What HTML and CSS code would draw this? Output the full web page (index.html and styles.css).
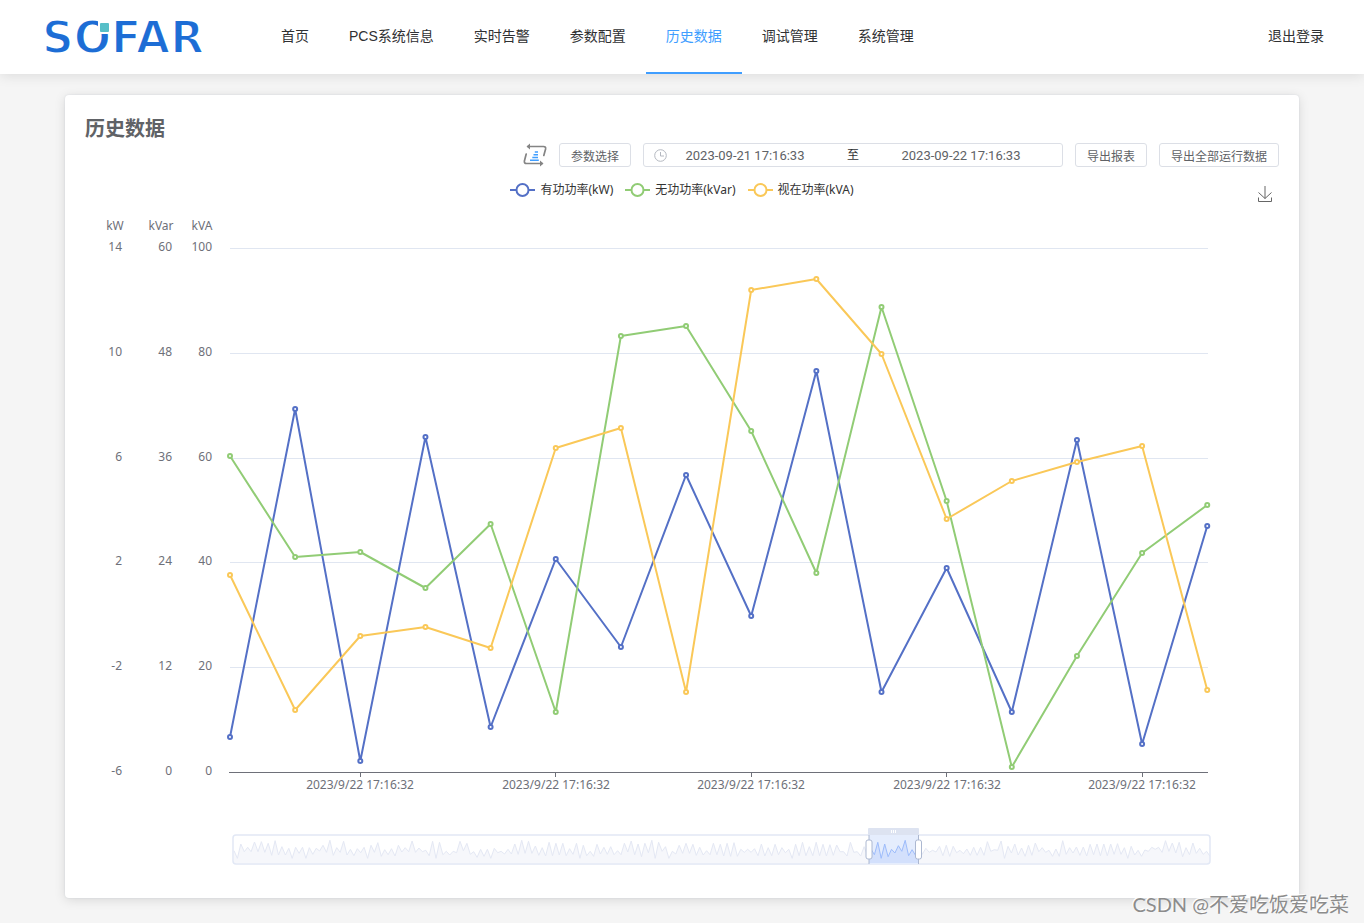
FILE: index.html
```html
<!DOCTYPE html>
<html lang="zh-CN">
<head>
<meta charset="utf-8">
<title>历史数据</title>
<link rel="stylesheet" href="styles.css">
</head>
<body>
<header class="topbar">
  <svg class="logo" width="170" height="40" viewBox="0 0 170 40" role="img" aria-label="SOFAR">
    <text class="logo-text" x="-3" y="35">SOFAR</text>
    <rect x="53" y="2" width="13" height="14" fill="#fff"/>
    <rect x="55" y="5" width="9" height="9" rx="1" fill="#57bfc8"/>
  </svg>
  <nav class="nav">
    <a href="#">首页</a>
    <a href="#">PCS系统信息</a>
    <a href="#">实时告警</a>
    <a href="#">参数配置</a>
    <a href="#" class="active">历史数据</a>
    <a href="#">调试管理</a>
    <a href="#">系统管理</a>
  </nav>
  <a href="#" class="logout">退出登录</a>
</header>

<main class="card">
  <h1 class="title">历史数据</h1>
  <div class="toolbar">
    <svg class="swap" width="24" height="24" viewBox="0 0 24 24" fill="none">
      <g stroke="#848484" stroke-width="1.700" stroke-linecap="round" stroke-linejoin="round">
        <path d="M5 3.500H20.500Q23 3.500 22.600 6L20.800 12.500"/>
        <path d="M19 20.500H3.500Q1 20.500 1.400 18L3.200 11"/>
      </g>
      <path d="M3.500 3.500L7 0.500V6.500ZM20.500 20.500L17 17.500V23.500Z" fill="#848484"/>
      <path d="M11.800 9H15M10.500 11.700H15M9.300 14.500H15M7 17.300H15.800" stroke="#409eff" stroke-width="1.500"/>
    </svg>
    <button type="button" class="btn">参数选择</button>
    <div class="range">
      <svg width="13" height="13" viewBox="0 0 13 13" fill="none" stroke="#b4b8c0">
        <circle cx="6.500" cy="6.500" r="5.800"/>
        <path d="M6.500 3V7H10"/>
      </svg>
      <input type="text" value="2023-09-21 17:16:33" aria-label="开始时间">
      <span>至</span>
      <input type="text" value="2023-09-22 17:16:33" aria-label="结束时间">
    </div>
    <button type="button" class="btn">导出报表</button>
    <button type="button" class="btn">导出全部运行数据</button>
  </div>

  <div class="chart-head">
    <ul class="legend">
      <li class="kw"><svg width="25" height="14"><path d="M0 7H25"/><circle cx="12.500" cy="7" r="6"/></svg>有功功率(kW)</li>
      <li class="kvar"><svg width="25" height="14"><path d="M0 7H25"/><circle cx="12.500" cy="7" r="6"/></svg>无功功率(kVar)</li>
      <li class="kva"><svg width="25" height="14"><path d="M0 7H25"/><circle cx="12.500" cy="7" r="6"/></svg>视在功率(kVA)</li>
    </ul>
    <button type="button" class="download" aria-label="下载">
      <svg width="16" height="17" viewBox="0 0 16 17" fill="none" stroke="#666">
        <path d="M1.500 11.500V15.500H14.500V11.500M8 0V12.500M1.500 6.500L8 12.500L14.500 6.500"/>
      </svg>
    </button>
  </div>

  <svg class="chart" viewBox="85 210 1194 668">
    <g class="grid">
      <path d="M230 248.500H1208M230 353.500H1208M230 458.500H1208M230 562.500H1208M230 667.500H1208"/>
    </g>
    <path class="axis" d="M229 772.500H1208M360.500 773V777M555.500 773V777M751.500 773V777M946.500 773V777M1142.500 773V777"/>
    <g id="labels"></g>
    <g id="series"></g>
    <g id="zoom">
      <path id="shade" class="shade"/>
      <path id="wave" class="wave"/>
      <rect class="zoom-box" x="233" y="835" width="977" height="29" rx="3"/>
      <rect class="zoom-sel" x="869" y="835" width="50" height="29"/>
      <clipPath id="sel"><rect x="869" y="835" width="50" height="29"/></clipPath>
      <g clip-path="url(#sel)">
        <path id="shade-sel" class="shade-sel"/>
        <path id="wave-sel" class="wave-sel"/>
      </g>
      <rect class="zoom-tab" x="868" y="828" width="51" height="7" rx="1"/>
      <path d="M891.500 830V833M893.500 830V833M895.500 830V833" stroke="#fff"/>
      <path class="handle" d="M869 835V864M918.500 835V864"/>
      <rect class="handle" x="866" y="840" width="6" height="19" rx="2"/>
      <rect class="handle" x="915.500" y="840" width="6" height="19" rx="2"/>
    </g>
  </svg>
</main>
<div class="watermark">CSDN @不爱吃饭爱吃菜</div>
<script src="chart.js"></script>
</body>
</html>
```
FILE: styles.css
```css
* { box-sizing: border-box; }
body {
  margin: 0;
  background: #f5f5f5;
  color: #303133;
  font: 14px "Liberation Sans", "Noto Sans CJK SC", sans-serif;
}
a { color: inherit; text-decoration: none; }
button, input { font: inherit; color: inherit; }

.topbar {
  display: flex;
  align-items: flex-start;
  padding: 0 40px 0 45px;
  background: #fff;
  box-shadow: 0 2px 12px rgba(0, 0, 0, 0.1);
}
.logo { margin: 18px 46px 0 0; flex: none; overflow: visible; }
.logo-text {
  font: bold 44px "DejaVu Sans", sans-serif;
  fill: #1d6dd5;
  stroke: #fff;
  stroke-width: 2px;
}
.nav { display: flex; flex: 1; }
.nav a {
  padding: 0 20px;
  line-height: 72px;
  border-bottom: 2px solid transparent;
  white-space: nowrap;
}
.nav .active { color: #409eff; border-color: #409eff; }
.logout { line-height: 72px; white-space: nowrap; }

.card {
  margin: 21px 65px 25px;
  padding: 20px;
  background: #fff;
  border-radius: 4px;
  box-shadow: 0 2px 12px rgba(0, 0, 0, 0.12), 0 0 2px #dcdfe6;
}
.title { margin: 0; font-size: 20px; line-height: 28px; color: #606266; }

.toolbar { display: flex; justify-content: flex-end; gap: 12px; height: 24px; }
.btn {
  padding: 0 11px;
  border: 1px solid #dcdfe6;
  border-radius: 3px;
  background: #fff;
  color: #606266;
  font-size: 12px;
  white-space: nowrap;
}
.range {
  display: flex;
  align-items: center;
  width: 420px;
  padding: 0 23px 0 10px;
  border: 1px solid #dcdfe6;
  border-radius: 3px;
}
.range input {
  flex: 1;
  min-width: 0;
  padding: 0;
  border: 0;
  background: none;
  text-align: center;
  color: #606266;
  font: 13px Roboto, sans-serif;
}
.range span { width: 60px; text-align: center; font-size: 12px; line-height: 22px; }

.chart-head {
  display: grid;
  grid-template-columns: 1fr auto 1fr;
  margin: 12px 0 7px;
  height: 24px;
}
.legend {
  grid-column: 2;
  display: flex;
  gap: 12px;
  margin: 0;
  padding: 0;
  list-style: none;
  color: #333;
  font: 12px/22px "Noto Sans", "Noto Sans CJK SC", sans-serif;
}
.legend li { display: flex; align-items: center; gap: 5px; height: 22px; }
.legend svg { stroke-width: 2px; fill: #fff; }
.kw { stroke: #5470c6; }
.kvar { stroke: #91cc75; }
.kva { stroke: #fac858; }
.download {
  justify-self: end;
  align-self: end;
  display: flex;
  margin-right: 6px;
  padding: 0;
  border: 0;
  background: none;
}

.chart { display: block; width: 100%; height: auto; }
.chart text { font: 12px "Noto Sans", sans-serif; fill: #6e7079; }
.grid { stroke: #e0e6f1; }
.axis { stroke: #6e7079; fill: none; }
.line { fill: none; stroke-width: 2px; stroke-linejoin: bevel; }
.dot { fill: #fff; stroke-width: 2px; }
.zoom-box { fill: none; stroke: #e2e8f5; stroke-width: 1.5px; }
.shade { fill: #f6f7fb; }
.wave { fill: none; stroke: #e4e8f4; }
.zoom-sel { fill: #e5edfd; }
.shade-sel { fill: #d3e0fc; }
.wave-sel { fill: none; stroke: #9dbcfb; }
.zoom-tab { fill: #dde3f1; }
.handle { fill: #fff; stroke: #acb8d1; }

.watermark {
  position: absolute;
  right: 15px;
  bottom: 4px;
  font: 20px/30px Lato, "Noto Sans CJK SC", sans-serif;
  color: #8c8c8c;
  text-shadow: -1px -1px 0 #fff;
}
```
FILE: chart.js
```js
const NS = "http://www.w3.org/2000/svg";
const byId = id => document.getElementById(id);
function add(parent, tag, attrs, text) {
  const el = document.createElementNS(NS, tag);
  for (const k in attrs) el.setAttribute(k, attrs[k]);
  if (text !== undefined) el.textContent = text;
  parent.appendChild(el);
}

const labels = byId("labels");
const axes = [
  { name: "kW", center: 115, right: 122, ticks: [14, 10, 6, 2, -2, -6] },
  { name: "kVar", center: 161, right: 172, ticks: [60, 48, 36, 24, 12, 0] },
  { name: "kVA", center: 202, right: 212, ticks: [100, 80, 60, 40, 20, 0] }
];
for (const a of axes) {
  add(labels, "text", { x: a.center, y: 230, "text-anchor": "middle" }, a.name);
  a.ticks.forEach((t, i) =>
    add(labels, "text", { x: a.right, y: Math.round(251 + i * 104.8), "text-anchor": "end" }, t));
}
for (const x of [360, 556, 751, 947, 1142])
  add(labels, "text", { x, y: 789, "text-anchor": "middle" }, "2023/9/22 17:16:32");

const series = {
  kw: [737, 409, 761, 437, 727, 559, 647, 475, 616, 371, 692, 568, 712, 440, 744, 526],
  kvar: [456, 557, 552, 588, 524, 712, 336, 326, 431, 573, 307, 501, 767, 656, 553, 505],
  kva: [575, 710, 636, 627, 648, 448, 428, 692, 290, 279, 354, 519, 481, 462, 446, 690]
};
const px = i => 230 + i * 65.15;
for (const [name, ys] of Object.entries(series))
  add(byId("series"), "polyline", { class: "line " + name, points: ys.map((y, i) => px(i) + "," + y).join(" ") });
for (const [name, ys] of Object.entries(series))
  ys.forEach((y, i) => add(byId("series"), "circle", { class: "dot " + name, cx: px(i), cy: y, r: 2 }));

const overview = [
  92,115,72,95,82,95,66,95,65,97,70,106,62,105,80,105,85,115,82,100,82,115,83,103,85,93,76,97,61,106,
  83,97,64,105,88,107,86,98,82,115,76,97,68,109,89,104,86,108,76,96,83,95,63,97,84,95,91,107,64,115,
  67,104,94,105,94,98,64,92,70,103,95,112,88,109,88,115,85,98,94,102,88,102,72,103,61,100,64,100,78,106,
  83,108,67,107,70,105,
  70,107,86,103,70,115,76,107,94,109,73,102,82,103,80,104,92,104,70,96,63,104,72,110,70,98,
  61,115,67,94,80,115,94,102,76,100,70,100,73,106,82,105,92,104,70,104,73,108,70,109,68,109,88,97,88,97,
  86,107,72,108,83,107,73,104,83,98,88,115,73,107,67,107,80,107,67,107,73,108,74,106,75,95,95,108,67,97,
  95,108,80,106,87,104,
  67,115,72,110,88,99,77,94,61,107,89,106,72,103,85,97,91,96,79,107,76,109,79,98,91,101,87,106,
  82,106,82,106,65,94,89,91,63,115,79,99,72,105,84,109,76,106,69,95,83,97,91,109,87,109,62,103,83,99,
  81,106,81,108,73,104,72,107,72,107,72,103,71,103,83,115,79,105,91,109,90,94,82,88,82,97,62,94,69,99,
  67,110,83,104,69,100,85,103,94,109
];
const step = 976 / (overview.length - 1);
const wave = "M" + overview.map((v, i) => (234 + i * step).toFixed(1) + " " + (820 + v / 3).toFixed(1)).join("L");
for (const s of ["", "-sel"]) {
  byId("wave" + s).setAttribute("d", wave);
  byId("shade" + s).setAttribute("d", wave + "V863H234Z");
}
```
